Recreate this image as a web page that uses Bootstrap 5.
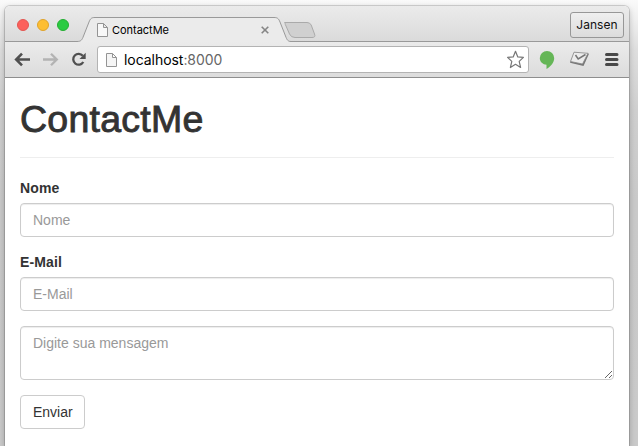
<!DOCTYPE html>
<html lang="pt-BR">
<head>
<meta charset="utf-8">
<meta name="viewport" content="width=device-width, initial-scale=1">
<title>ContactMe</title>
<link href="https://cdn.jsdelivr.net/npm/bootstrap@5.3.0/dist/css/bootstrap.min.css" rel="stylesheet">
<style>
body{height:446px;overflow:hidden;background:linear-gradient(#fafafa,#f4f4f4 12px,#dedede 50px,#cfcfcf 110px,#c9c9c9 200px,#cacaca);font-family:"Liberation Sans",Arial,sans-serif;font-size:14px;line-height:20px;color:#333}
.window{width:624px;height:440px;margin-left:5px;border-radius:5px 5px 0 0;box-shadow:0 0 0 1px rgba(0,0,0,.14),0 2px 6px rgba(0,0,0,.25)}
.desktop{height:446px;padding-top:6px;overflow:hidden}
.tabstrip{height:36px;border-radius:5px 5px 0 0;background:linear-gradient(#ebebeb,#dadada);font-family:Inter,Roboto,sans-serif;color:#111}
.tab-shapes{left:0;top:0}
.lights{gap:8px;padding:13px 0 0 12px;width:91px}
.light{width:12px;height:12px;border-radius:50%;border:1px solid}
.tab-name{font-size:11px;width:148.5px;margin-left:4px;line-height:16px;padding-top:16px;letter-spacing:-.02px;color:#000}
.user-btn{width:54px;height:26px;margin:6px 5px 0 0;border:1px solid #979797;border-radius:3px;background:linear-gradient(#efefef,#dcdcdc);font-size:12px;line-height:24px;padding:0;color:#111;letter-spacing:.05px}
.toolbar{height:36px;background:linear-gradient(#ebebeb,#dcdcdc);border-bottom:1px solid #8e8e8e}
.address{width:432px;height:27px;border:1px solid #b3b3b3;border-radius:3px;font-family:Inter,Roboto,sans-serif;font-size:14px;letter-spacing:-.05px;color:#000}
.url-text{margin-left:7px}
.port{color:#666}
.page{height:368px;padding:19px 15px 0}
.page h1{font-size:37.5px;font-weight:400;line-height:40px;letter-spacing:.25px;-webkit-text-stroke:.9px #333;padding-top:2px;height:40px}
.rule{height:1px;background:#eee;margin:20px 0}
.page label{font-weight:700;height:20px;margin-bottom:5px;font-size:14px;letter-spacing:.15px}
.page .form-control{font-size:14px;line-height:20px;height:34px;padding:6px 12px;border:1px solid #ccc;border-radius:4px;box-shadow:inset 0 1px 1px rgba(0,0,0,.075)}
.page textarea.form-control{height:54px;min-height:0}
.page .form-control::placeholder{color:#999;opacity:1}
.form-group{margin-bottom:15px}
.send{font-size:14px;line-height:20px;padding:6px 12px;border:1px solid #ccc;border-radius:4px;background:#fff;color:#333;width:65px;height:34px;white-space:nowrap}
</style>
</head>
<body>
<div class="desktop">
<div class="window bg-white">
  <header class="tabstrip d-flex position-relative">
    <svg class="tab-shapes position-absolute" width="624" height="36" viewBox="0 1 624 36" fill="none">
      <path d="M0 36.500H72C76 36.500 77 35 78.500 31L84 17C85.400 13.500 86.500 12.500 90 12.500H269C272.500 12.500 273.600 13.500 275 17L280.500 31C282 35 283 36.500 286 36.500H624V38H0Z" fill="#ebebeb" stroke="#999"/>
      <path d="M279.500 17.500H302Q305 17.500 306.200 20L309.500 29Q311 32.500 307 32.500H290Q286 32.500 284.500 29L281 21Q279 17.500 281.500 17.500Z" fill="#d0d0d0" stroke="#aaa"/>
    </svg>
    <div class="lights d-flex position-relative flex-shrink-0">
      <span class="light" style="background:#fc605b;border-color:#e35652"></span>
      <span class="light" style="background:#fdbe32;border-color:#dfa32b"></span>
      <span class="light" style="background:#2bcb42;border-color:#24ae32"></span>
    </div>
    <svg class="position-relative flex-shrink-0" width="12" height="36" viewBox="0 -16 12 36" fill="#f8f8f8" stroke="#949494"><path d="M1.500 1.500H7.500L11.500 5.500V14.500H1.500ZM7.500 1.500V5.500H11.500"/></svg>
    <span class="tab-name position-relative">ContactMe</span>
    <svg class="position-relative flex-shrink-0" width="9" height="36" viewBox="0 1 9 36" stroke="#858585" stroke-width="1.600"><path d="M.7 21.700L7.300 28.300M7.300 21.700L.7 28.300"/></svg>
    <button class="user-btn ms-auto position-relative">Jansen</button>
  </header>
  <nav class="toolbar d-flex align-items-center">
    <svg class="flex-shrink-0" width="92" height="36" viewBox="0 0 92 36" fill="none" stroke="#505050" stroke-width="2.600">
      <path d="M11 17.500H25M17 11.700L11.200 17.500L17 23.300"/>
      <path d="M38 17.500H52M46 11.700L51.800 17.500L46 23.300" stroke="#b3b3b3" stroke-width="2.300"/>
      <path d="M77.800 13.800A5.400 5.400 0 1 0 78.300 20" stroke-width="2.300"/><path d="M80.700 10.800V17H74.500Z" fill="#505050" stroke="none"/>
    </svg>
    <div class="address bg-white d-flex align-items-center flex-shrink-0">
      <svg class="ms-2" width="11" height="16" viewBox="0 0 11 16" fill="#f5f5f5" stroke="#949494"><path d="M.5 1.500H6.500L10.500 5.500V14.500H.5ZM6.500 1.500V5.500H10.500"/></svg>
      <span class="url-text">localhost<span class="port">:8000</span></span>
      <svg class="ms-auto me-1" width="18" height="19" viewBox="0 0 18 19" fill="#fff" stroke="#777" stroke-width="1.200" stroke-linejoin="round"><path d="M9.500 1.300L11.800 6.900L17.400 7.400L13.200 11.400L14.600 17.500L9.500 14.300L4.400 17.500L5.800 11.400L1.600 7.400L7.200 6.900Z"/></svg>
    </div>
    <svg width="100" height="36" viewBox="0 0 100 36">
      <path d="M18 9A7.200 7.200 0 0 0 10.800 16C10.800 20.200 14 22.500 17.500 22.700V27C22 24.500 25.200 20.500 25.200 16A7.200 7.200 0 0 0 18 9Z" fill="#65b657"/>
      <path d="M45.500 10.400L60 11.800L54.500 24L41 20.800Z" fill="#777"/><path d="M45 10.200L59 11.300L53.500 22L41.500 19.500Z" fill="#ececec" stroke="#858585" stroke-width=".8"/><path d="M46.500 13L49.200 17L56.500 12.500" fill="none" stroke="#777" stroke-width="1.500"/>
      <path d="M77.500 12.500H88M77.500 17.500H88M77.500 22.500H88" stroke="#484848" stroke-width="3" stroke-linecap="round"/>
    </svg>
  </nav>
  <main class="page">
    <h1 class="m-0">ContactMe</h1>
    <div class="rule"></div>
    <form>
      <div class="form-group"><label class="d-block" for="nome">Nome</label><input id="nome" class="form-control" placeholder="Nome"></div>
      <div class="form-group"><label class="d-block" for="email">E-Mail</label><input id="email" class="form-control" placeholder="E-Mail"></div>
      <div class="form-group"><textarea class="form-control d-block" placeholder="Digite sua mensagem"></textarea></div>
      <button type="button" class="btn send">Enviar</button>
    </form>
  </main>
</div>
</div>
<script src="https://cdn.jsdelivr.net/npm/bootstrap@5.3.0/dist/js/bootstrap.bundle.min.js"></script>
</body>
</html>
